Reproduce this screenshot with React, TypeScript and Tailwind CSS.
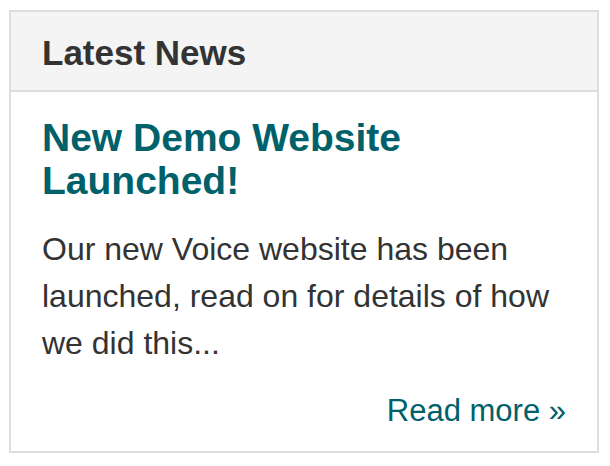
function LatestNews() {
  return (
    <div className="ml-[9px] mt-[10px] w-[590px] border-2 border-[#dddddd] bg-white">
      {/* header */}
      <div className="h-[80px] border-b-2 border-[#dddddd] bg-[#f4f4f4] px-[31px] pt-[22px]">
        <h2 className="text-[35px] font-bold leading-[38px] text-[#333333]">Latest News</h2>
      </div>

      {/* body */}
      <div className="px-[31px] pt-[24px] pb-[17px]">
        <h3 className="text-[39px] font-bold leading-[43px] text-[#00616a]">
          New Demo Website Launched!
        </h3>
        <p className="mt-[24px] text-[32px] leading-[47px] text-[#333333]">
          Our new Voice website has been launched, read on for details of how we did this...
        </p>
        <div className="mt-[21px] flex justify-end">
          <a href="#" className="text-[31px] leading-[46px] text-[#00616a]">
            Read more »
          </a>
        </div>
      </div>
    </div>
  );
}

export default function App() {
  return (
    <div className="min-h-[466px] bg-white pt-px" style={{ fontFamily: '"Liberation Sans", Arial, sans-serif' }}>
      <div className="-mt-px">
        <LatestNews />
      </div>
    </div>
  );
}
